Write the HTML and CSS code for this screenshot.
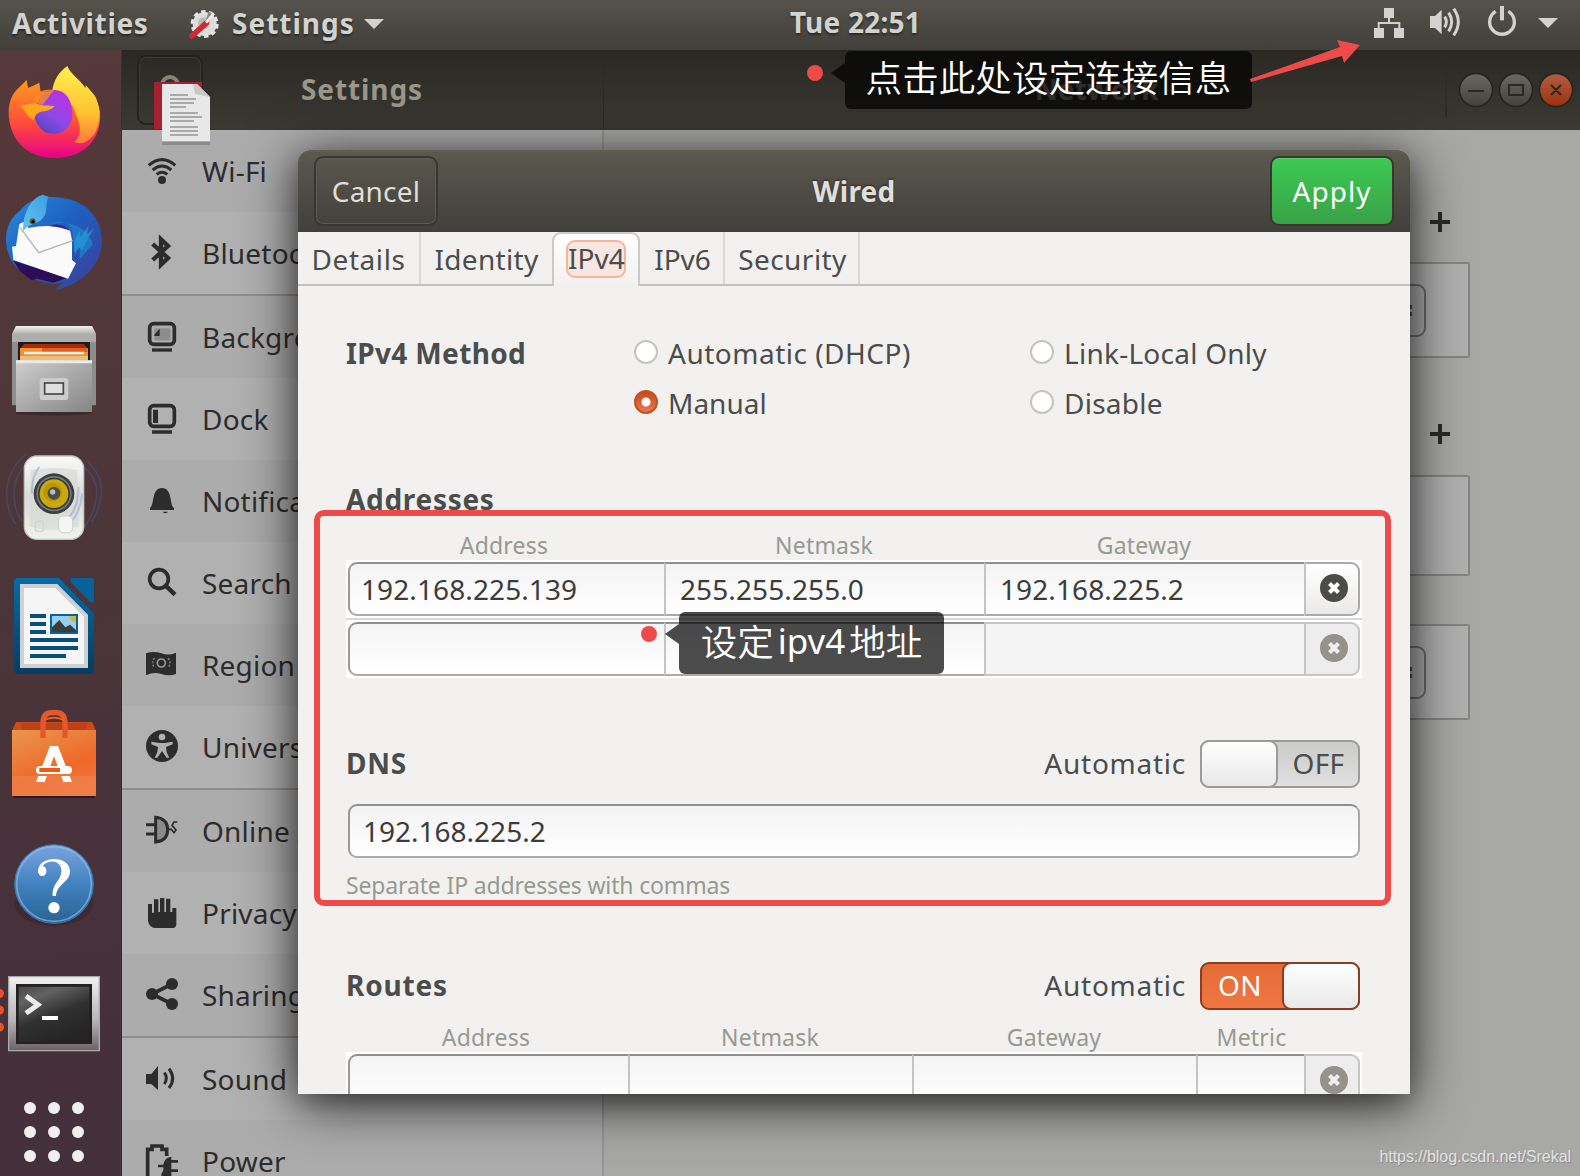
FILE: index.html
```html
<!DOCTYPE html>
<html lang="en">
<head>
<meta charset="utf-8">
<title>Settings</title>
<link rel="stylesheet" href="styles.css">
</head>
<body>
<div class="desktop">
  <header class="topbar">
    <span class="activities">Activities</span>
    <svg class="app-icon" viewBox="564 15 96 96"><circle cx="614" cy="66" r="36" fill="#dcdcda" stroke="#e4e4e2" stroke-width="12" stroke-dasharray="13 9.6"/><circle cx="612" cy="64" r="18" fill="#bbb"/><path d="M618 52l8-24 8 6-4 24z" fill="#8a8882"/><path d="M576 102l42-38" stroke="#cf2a31" stroke-width="17" stroke-linecap="round"/><path d="M618 62l24-28" stroke="#eee" stroke-width="8"/></svg>
    <span class="app-name">Settings</span>
    <svg class="app-caret" viewBox="0 0 20 12"><path d="M0 1h20l-10 10z"/></svg>
    <span class="clock">Tue 22:51</span>
    <svg class="tray" viewBox="390 0 630 150" fill="#d2d2cf"><path d="M432 24h30v30h-30zM402 84h30v30h-30zM462 84h30v30h-30z"/><path d="M447 54v15M416 86V69h62v17" fill="none" stroke="#d2d2cf" stroke-width="6"/><path d="M570 48h15l20-19v74l-20-19h-15z"/><path d="M614 50q10 16 0 32M626 38q18 28 0 56M641 26q28 40 0 80" fill="none" stroke="#d2d2cf" stroke-width="9"/><path d="M767 34a37 37 0 1 0 38 0" fill="none" stroke="#d2d2cf" stroke-width="10"/><path d="M780 18h12v43h-12z"/><path d="M894 54h60l-30 30z"/></svg>
  </header>

  <div class="workspace">
    <nav class="dock">
      <svg class="slot first" viewBox="0 150 366 381">
        <defs>
          <linearGradient id="fxp" x1="0" y1="1" x2=".6" y2="0"><stop offset="0" stop-color="#4b3fae"/><stop offset=".5" stop-color="#8a4be8"/><stop offset="1" stop-color="#b833e1"/></linearGradient>
          <linearGradient id="fxb" x1="0" y1="0" x2="0" y2="1"><stop offset="0" stop-color="#ff9a1c"/><stop offset=".55" stop-color="#ff4d3a"/><stop offset="1" stop-color="#e6008a"/></linearGradient>
          <linearGradient id="fxy" x1="0" y1="0" x2="0" y2="1"><stop offset="0" stop-color="#fff04c"/><stop offset=".6" stop-color="#ffc332"/><stop offset="1" stop-color="#ff7a3c"/></linearGradient>
        </defs>
        <path d="M46 274l34-34 4 24 14-6 20-10 4 28 42 2 96-16 8 8 20 22 12 44c6 80-46 138-136 138S26 412 26 336c0-24 8-46 20-62z" fill="url(#fxb)"/>
        <path d="M156 278c4-38 22-64 46-80 10 26 42 44 54 66l2-8 24 28c20 34 22 68 8 104-14 34-44 50-66 38 26-26 14-58 4-82-10-40-30-52-72-66z" fill="url(#fxy)"/>
        <path d="M102 340c4-36 24-66 58-70 28 0 50 14 56 58 8 44-20 74-56 74-32 0-54-26-58-62z" fill="url(#fxp)"/>
        <path d="M62 318c28-10 44-10 66-2l36 2c-10 14-28 14-44 18-16 8-16 16-18 24-20-6-26-28-40-42z" fill="#ffa61f"/>
        <path d="M118 276q20-10 44-6l-34 44-30-8q6-20 20-30z" fill="#ff8a24" opacity=".8"/>
      </svg>
      <svg class="slot" viewBox="0 531 366 387">
        <defs><linearGradient id="tb" x1="0" y1="0" x2="1" y2="1"><stop offset="0" stop-color="#2b8be0"/><stop offset=".45" stop-color="#1d5fbf"/><stop offset="1" stop-color="#3f3d94"/></linearGradient>
        <linearGradient id="tbh" x1="1" y1="0" x2="0" y2="1"><stop offset="0" stop-color="#3ba0e0"/><stop offset="1" stop-color="#63c3ee"/></linearGradient></defs>
        <path d="M60 632C96 586 160 584 216 600c60 20 90 70 90 126-2 70-62 128-140 144l24-22-30 4C80 840 20 800 18 720c0-40 16-70 42-88z" fill="url(#tb)"/>
        <path d="M40 782l100 32 60 20-40 14-50-12-16 4-34-26z" fill="#2c0e56"/>
        <path d="M144 676c26-18 60-18 74 22l4 60 20-18-4 38 40-44c-10-50-70-80-134-58z" fill="#2176c8"/>
        <path d="M58 672l12-6 16 18c40-8 84-10 124 6l6 30v60l12 10-24 46L40 780l-4-40 12-2z" fill="#fafafa"/>
        <path d="M60 682l56 76 102-36" fill="none" stroke="#b3b3b3" stroke-width="4"/>
        <path d="M70 694c-4-44 18-98 58-110l18 6c-14 28 4 50-28 74-22 10-38 14-48 30z" fill="url(#tbh)"/>
        <path d="M148 678c22-10 46-4 64 16-18-10-40-14-64-16z" fill="#3a2385"/>
        <path d="M222 730l16-40 4 20 24-34-4 26 22-20-40 70-8-12-10 24z" fill="#25a0e0" opacity=".6"/>
        <circle cx="98" cy="664" r="9" fill="#6b5626"/><circle cx="99" cy="665" r="5" fill="#111"/>
      </svg>
      <svg class="slot" viewBox="0 18 366 387">
        <defs><linearGradient id="cab" x1="0" y1="0" x2="1" y2="1"><stop offset="0" stop-color="#cfcfcf"/><stop offset="1" stop-color="#858585"/></linearGradient>
        <linearGradient id="cabt" x1="0" y1="0" x2="0" y2="1"><stop offset="0" stop-color="#f2f2f2"/><stop offset="1" stop-color="#b0b0b0"/></linearGradient></defs>
        <path d="M48 334h228v8q-114 10-228 0z" fill="#30222a" opacity=".6"/>
        <path d="M48 78h228l12 24v214H36V102z" fill="#8d8d8d"/><path d="M48 78h228l12 24H36z" fill="url(#cabt)"/><path d="M36 102h252v24H36z" fill="#adadad"/>
        <path d="M54 126h216v60H54z" fill="#1c1c1c"/><path d="M72 132h180l12 16H60z" fill="#a82b08"/><path d="M60 144h204v40H60z" fill="#ef9236"/><path d="M126 144h136v12H126z" fill="#df6020"/><path d="M72 155h180v8H72z" fill="#f8f0ea"/><path d="M60 168h204v14H60z" fill="#eebd78"/>
        <path d="M48 181h228v155H48z" fill="url(#cab)"/><path d="M48 181h228v9H48z" fill="#ebebeb"/>
        <rect x="119" y="234" width="86" height="66" rx="10" fill="#ccc"/><rect x="134" y="249" width="56" height="33" fill="#dedede" stroke="#484848" stroke-width="5"/>
      </svg>
      <svg class="slot" viewBox="0 405 366 387">
        <defs><linearGradient id="spk" x1="0" y1="0" x2="0" y2="1"><stop offset="0" stop-color="#fafaf9"/><stop offset=".5" stop-color="#dadcd9"/><stop offset="1" stop-color="#f1f2f0"/></linearGradient></defs>
        <g fill="none" stroke="#44547c" stroke-width="5" opacity=".55"><path d="M78 462q-60 54-58 120 2 60 28 90M80 490q-40 40-38 90 2 60 24 82M250 500q40 30 40 80t-40 106M262 484q44 40 42 94-2 50-30 88"/></g>
        <rect x="73" y="468" width="178" height="250" rx="38" fill="url(#spk)" stroke="#c3c5c0" stroke-width="4"/>
        <path d="M92 510q70-12 140 0l4 170q-74 20-148 0z" fill="#d5d7d4" opacity=".6"/>
        <circle cx="162" cy="581" r="61" fill="#3a3e40"/><circle cx="162" cy="581" r="53" fill="#74797a"/><circle cx="162" cy="581" r="48" fill="#34383a"/><circle cx="162" cy="581" r="43" fill="#cba90d"/><circle cx="158" cy="576" r="28" fill="#b99500"/><circle cx="162" cy="580" r="19" fill="#4c4c4a"/><circle cx="158" cy="576" r="8" fill="#bbb"/>
        <path d="M118 500q-24 30-22 80M236 560q-2 80-46 106M246 580q-4 60-40 94" fill="none" stroke="#6d93c8" stroke-width="6" opacity=".4"/>
        <rect x="176" y="648" width="42" height="50" rx="14" fill="#f5f5f5" stroke="#d0d1cf" stroke-width="3"/><rect x="106" y="664" width="24" height="30" rx="6" fill="none" stroke="#d3d4d2" stroke-width="4"/>
      </svg>
      <svg class="slot" viewBox="0 792 366 387">
        <defs><linearGradient id="wr" x1="0" y1="0" x2="0" y2="1"><stop offset="0" stop-color="#066ba5"/><stop offset="1" stop-color="#053d60"/></linearGradient></defs>
        <path d="M54 834h122l106 106v168q0 14-14 14H56q-14 0-14-14V848q0-14 12-14z" fill="url(#wr)"/><path d="M210 834h64q8 0 8 8v64q-8 4-14-2l-56-58z" fill="#06629b"/>
        <path d="M60 852h112l92 92v160H60z" fill="#cfd0d2"/><path d="M72 864h94l86 86v142H72z" fill="#f5f5f5"/>
        <path d="M90 948h48M90 972h48M90 996h48M90 1020h144M90 1044h144M90 1068h108" stroke="#045078" stroke-width="12"/>
        <path d="M150 942h84v60h-84z" fill="#06629b"/><path d="M156 948h72v48h-72z" fill="#97cff1"/><path d="M208 948h20v18q-18 0-20-18z" fill="#cdb743"/><path d="M156 996v-14l22-22 18 22 14-8 18 16v6z" fill="#3c3c3c"/>
      </svg>
      <svg class="slot" viewBox="0 9 366 387">
        <defs><linearGradient id="bag" x1="0" y1="0" x2=".5" y2="1"><stop offset="0" stop-color="#e9964f"/><stop offset=".7" stop-color="#ee692a"/><stop offset="1" stop-color="#ef7239"/></linearGradient></defs>
        <path d="M40 318h244v6H40z" fill="#291b20"/><path d="M48 96h228l12 26H36z" fill="#d04a18"/><path d="M60 98h204l-6 22H66z" fill="#bc4117"/>
        <path d="M36 120h252v198H36z" fill="url(#bag)"/><path d="M36 258h252v60H36z" fill="#f0814c" opacity=".7"/><path d="M129 144v-44q0-32 26-32h14q26 0 26 32v44" fill="none" stroke="#e4592a" stroke-width="16"/><path d="M132 90q30-14 60 0" fill="none" stroke="#ee5c20" stroke-width="6"/>
        <path d="M150 168h24l42 108h-26l-28-78-28 78h-26z" fill="#fff"/><rect x="108" y="228" width="108" height="24" rx="12" fill="#fff"/><path d="M118 234h62v12h-62z" fill="#f15a0c"/><path d="M106 252h110v6H106z" fill="#ef7239"/>
      </svg>
      <svg class="slot" viewBox="0 396 366 387">
        <defs><linearGradient id="hp" x1="0" y1="0" x2="0" y2="1"><stop offset="0" stop-color="#7aa4e0"/><stop offset=".5" stop-color="#4282c0"/><stop offset="1" stop-color="#296293"/></linearGradient></defs>
        <ellipse cx="162" cy="640" rx="118" ry="68" fill="#352229" opacity=".5"/>
        <circle cx="162" cy="582" r="118" fill="url(#hp)" stroke="#3a78b0" stroke-width="3"/><circle cx="162" cy="582" r="112" fill="none" stroke="#96bfe6" stroke-width="5" opacity=".6"/>
        <path d="M114 542C118 494 210 496 210 544c0 34-40 38-42 74h-10c-2-42 26-44 26-76 0-34-42-34-56-14 14 2 16 28 0 30-10 0-14-8-14-16z" fill="#fff"/><circle cx="162" cy="653" r="17" fill="#fff"/>
      </svg>
      <svg class="slot" viewBox="0 783 366 387">
        <defs><linearGradient id="tm" x1="0" y1="0" x2="0" y2="1"><stop offset="0" stop-color="#f2f2f2"/><stop offset=".6" stop-color="#b5b3b4"/><stop offset="1" stop-color="#6b6165"/></linearGradient>
        <linearGradient id="ts" x1="0" y1="0" x2=".5" y2="1"><stop offset="0" stop-color="#494949"/><stop offset=".25" stop-color="#626262"/><stop offset=".6" stop-color="#303030"/><stop offset="1" stop-color="#252525"/></linearGradient></defs>
        <g fill="#e2542a"><circle cx="-2" cy="910" r="14"/><circle cx="-2" cy="960" r="14"/><circle cx="-2" cy="1011" r="14"/></g>
        <path d="M26 860h272v222H26z" fill="url(#tm)" stroke="#aaa" stroke-width="4"/><path d="M48 882h228v180H48z" fill="#242022"/><path d="M56 890h212v166H56z" fill="url(#ts)"/>
        <path d="M78 918l36 26-36 26" fill="none" stroke="#eee" stroke-width="15"/><path d="M126 978h48v12h-48z" fill="#fff"/>
      </svg>
      <svg class="slot last" viewBox="0 1170 366 288" fill="#efefed"><circle cx="90" cy="1254" r="18"/><circle cx="162" cy="1254" r="18"/><circle cx="234" cy="1254" r="18"/><circle cx="90" cy="1326" r="18"/><circle cx="162" cy="1326" r="18"/><circle cx="234" cy="1326" r="18"/><circle cx="90" cy="1398" r="18"/><circle cx="162" cy="1398" r="18"/><circle cx="234" cy="1398" r="18"/></svg>
    </nav>

    <section class="window">
      <div class="titlebar">
        <div class="title-left">
          <div class="search-button"><svg viewBox="0 0 24 24"><circle cx="12" cy="11" r="8" fill="none" stroke="#86827a" stroke-width="4"/></svg></div>
          <span class="title-text">Settings</span>
        </div>
        <div class="title-right">
          <span class="network-title">Network</span>
          <div class="controls">
            <svg viewBox="0 0 120 40"><defs><linearGradient id="wb" x1="0" y1="0" x2="0" y2="1"><stop offset="0" stop-color="#696862"/><stop offset="1" stop-color="#42423c"/></linearGradient><linearGradient id="wc" x1="0" y1="0" x2="0" y2="1"><stop offset="0" stop-color="#b05f42"/><stop offset="1" stop-color="#9d300c"/></linearGradient></defs><g stroke="#23231f" stroke-width="1.5"><circle cx="20" cy="20" r="16.5" fill="url(#wb)"/><circle cx="60" cy="20" r="16.5" fill="url(#wb)"/><circle cx="100" cy="20" r="16.5" fill="url(#wc)"/></g><path d="M12 21h16M53 15h14v10H53zM95 15l10 10m0-10L95 25" fill="none" stroke="#292824" stroke-width="2"/></svg>
          </div>
        </div>
      </div>
      <div class="window-body">
        <ul class="sidebar">
          <li class="odd"><svg viewBox="366 390 180 246"><circle cx="486" cy="540" r="12"/><path d="M446 496q40-34 80 0M458 510q28-24 56 0M470 523q16-12 32 0" fill="none" stroke="#2c2c2c" stroke-width="9"/></svg><span>Wi-Fi</span></li>
          <li class="even sep"><svg viewBox="366 636 180 246"><path d="M458 732l46 42-21 20v-76l21 20-46 42" fill="none" stroke="#2c2c2c" stroke-width="13"/></svg><span>Bluetooth</span></li>
          <li class="odd"><svg viewBox="366 -12 180 246"><rect x="449" y="71" width="74" height="62" rx="12" fill="none" stroke="#2c2c2c" stroke-width="11"/><path d="M463 85h48v36h-48z" fill="#8d8d8d"/><path d="M463 104l16-18v22h-16z"/><path d="M456 145h60v10h-60z"/></svg><span>Background</span></li>
          <li class="even"><svg viewBox="366 234 180 246"><rect x="449" y="317" width="74" height="62" rx="12" fill="none" stroke="#2c2c2c" stroke-width="11"/><path d="M459 329h15v40h-15zM456 391h60v10h-60z"/></svg><span>Dock</span></li>
          <li class="odd"><svg viewBox="366 480 180 246"><path d="M450 630v-6c14-10 4-60 36-60s22 50 36 60v6zM488 635h16q-8 10-16 0z"/></svg><span>Notifications</span></li>
          <li class="even"><svg viewBox="366 726 180 246"><circle cx="477" cy="837" r="28" fill="none" stroke="#2c2c2c" stroke-width="11"/><path d="M497 857l28 27" stroke="#2c2c2c" stroke-width="13"/></svg><span>Search</span></li>
          <li class="odd"><svg viewBox="366 972 180 246"><path d="M438 1060q24-8 46 0t44-2v64q-22 8-44 0t-46 4z"/><circle cx="484" cy="1089" r="12" fill="none" stroke="#999" stroke-width="5"/><path d="M464 1074q-12 14 0 30M504 1074q12 14 0 30" fill="none" stroke="#777" stroke-width="5" stroke-dasharray="6 5"/></svg><span>Region &amp; Language</span></li>
          <li class="even sep"><svg viewBox="366 48 180 246"><circle cx="486" cy="168" r="48"/><circle cx="486" cy="141" r="10" fill="#b0b0b0"/><path d="M454 155l24 4h16l24-4v8l-20 8 2 16 8 16h-8l-14-20-14 20h-8l8-16 2-16-20-8z" fill="#b0b0b0"/></svg><span>Universal Access</span></li>
          <li class="odd"><svg viewBox="366 300 180 246"><path d="M467 382q36 4 36 37t-36 37z" fill="#8b8b8b" stroke="#2c2c2c" stroke-width="9"/><path d="M438 404h26M438 432h26" stroke="#2c2c2c" stroke-width="9"/><path d="M504 418h10l8 10 6-8-12-14 6-10h10" fill="none" stroke="#2c2c2c" stroke-width="5"/></svg><span>Online Accounts</span></li>
          <li class="even"><svg viewBox="366 546 180 246"><path d="M444 642h12v26h6v-40h13v38h5v-42h13v42h5v-40h13v40h6v-12h12v50q-2 10-12 10h-48q-22 0-25-22z"/></svg><span>Privacy</span></li>
          <li class="odd sep"><svg viewBox="366 792 180 246"><circle cx="456" cy="912" r="18"/><circle cx="516" cy="882" r="18"/><circle cx="516" cy="942" r="18"/><path d="M516 882l-60 30 60 30" fill="none" stroke="#2c2c2c" stroke-width="11"/></svg><span>Sharing</span></li>
          <li class="even"><svg viewBox="366 1044 180 246"><path d="M438 1152h16l20-24v72l-20-18h-16z"/><path d="M493 1148q12 16 0 34M507 1136q22 30 0 58" fill="none" stroke="#2c2c2c" stroke-width="9"/></svg><span>Sound</span></li>
          <li class="odd"><svg viewBox="366 1290 180 246"><path d="M456 1464h-13v-86h13v-10h30v10h14v20" fill="none" stroke="#2c2c2c" stroke-width="11"/><path d="M474 1424h16q4-22 24-24v10h20v8h-20v20h20v8h-20v26h-30v-20q8-10 6-20h-16z"/></svg><span>Power</span></li>
        </ul>
        <div class="network-panel">
          <div class="plus"></div>
          <div class="frame f1"><i></i></div>
          <div class="plus p2"></div>
          <div class="frame f2"></div>
          <div class="frame f3"><i></i></div>
        </div>
      </div>
    </section>
  </div>

  <svg class="drag-icon" viewBox="0 0 58 64"><path d="M1 1h48v47H1z" fill="#a52031"/><path d="M9 61h48v3H9z" fill="#777" opacity=".6"/><path d="M9 3h35l13 13v44H9z" fill="#e8e8e8"/><path d="M40 3h4l13 13-15-3z" fill="#c9c9c9"/><path d="M17 14h18M17 18h26M17 22h24M17 26h16M17 32h28M17 36h32M17 40h24M17 46h28M17 50h28M17 54h28" stroke="#aaa" stroke-width="2"/></svg>

  <section class="dialog">
    <header class="dialog-bar">
      <button class="btn cancel">Cancel</button>
      <h1>Wired</h1>
      <button class="btn apply">Apply</button>
    </header>
    <div class="tabs">
      <div class="tab t1"><span>Details</span></div><div class="tab t2"><span>Identity</span></div><div class="tab t3 active"><span>IPv4</span></div><div class="tab t4"><span>IPv6</span></div><div class="tab t5"><span>Security</span></div>
    </div>
    <div class="dialog-body">
      <div class="methods">
        <h2 class="method-title">IPv4 Method</h2>
        <label><i class="radio"></i><span class="dhcp">Automatic (DHCP)</span></label>
        <label><i class="radio"></i><span class="local">Link-Local Only</span></label>
        <label class="manual"><i class="radio on"></i><span>Manual</span></label>
        <label><i class="radio"></i><span class="local">Disable</span></label>
      </div>
      <h2 class="addr-title">Addresses</h2>
      <div class="cols heads"><span>Address</span><span>Netmask</span><span>Gateway</span></div>
      <div class="table pair">
        <div class="cols row"><span>192.168.225.139</span><span>255.255.255.0</span><span>192.168.225.2</span><b><svg viewBox="0 0 28 28"><circle cx="14" cy="14" r="14"/><path d="M9.5 9.5l9 9m0-9l-9 9" stroke="#fff" stroke-width="4"/></svg></b></div>
        <div class="cols row second"><span></span><span></span><span class="off"></span><b class="off"><svg viewBox="0 0 28 28"><circle cx="14" cy="14" r="14"/><path d="M9.5 9.5l9 9m0-9l-9 9" stroke="#eee" stroke-width="4"/></svg></b></div>
      </div>
      <div class="switch-row dns"><h2>DNS</h2><span>Automatic</span><div class="switch"><i></i><em>OFF</em></div></div>
      <div class="entry">192.168.225.2</div>
      <p class="hint">Separate IP addresses with commas</p>
      <div class="switch-row routes"><h2>Routes</h2><span>Automatic</span><div class="switch on"><em>ON</em><i></i></div></div>
      <div class="rcols heads rheads"><span>Address</span><span>Netmask</span><span>Gateway</span><span>Metric</span></div>
      <div class="table">
        <div class="rcols row"><span></span><span></span><span></span><span></span><b class="off"><svg viewBox="0 0 28 28"><circle cx="14" cy="14" r="14"/><path d="M9.5 9.5l9 9m0-9l-9 9" stroke="#eee" stroke-width="4"/></svg></b></div>
      </div>
    </div>
  </section>

  <div class="mark-box"></div>
  <div class="dot dot1"></div>
  <div class="tip tip1">点击此处设定连接信息</div>
  <svg class="arrow" viewBox="0 0 114 48"><path d="M2 41L92 9 89 2l23 5-16 18-2-7L3 44z" fill="#ee4a4a"/></svg>
  <div class="dot dot2"></div>
  <div class="tip tip2"><span>设定</span><span class="latin">ipv4</span><span>地址</span></div>
  <div class="watermark">https://blog.csdn.net/Srekal</div>
</div>
</body>
</html>
```

FILE: styles.css
```css
* { box-sizing: border-box; }
body { margin: 0; font-family: "Noto Sans", "Open Sans", sans-serif; font-size: 28px; }
h1, h2, p, ul { margin: 0; padding: 0; font-size: inherit; }
svg { display: block; flex: none; }
.desktop { position: relative; width: 1580px; height: 1176px; overflow: hidden; display: flex; flex-direction: column; white-space: nowrap; }

/* top panel */
.topbar { height: 50px; flex: none; display: flex; align-items: center; padding: 0 0 5px 12px; background: linear-gradient(#55534b, #403f3a); color: #d2d2cf; font-weight: 700; text-shadow: 0 2px 2px #2a2a26; }
.activities { width: 177px; letter-spacing: .65px; }
.app-icon { width: 32px; height: 32px; margin: 0 1px 0 -1px; }
.app-name { width: 122px; margin-left: 11px; letter-spacing: 1px; }
.app-caret { width: 20px; height: 12px; margin: 2px 0 0 10px; fill: #d2d2cf; }
.clock { margin-left: 406px; padding-bottom: 2px; line-height: 42px; letter-spacing: .25px; }
.tray { width: 210px; height: 50px; margin: 5px 0 0 auto; }

/* launcher */
.workspace { flex: 1; display: flex; min-height: 0; }
.dock { width: 122px; flex: none; background: linear-gradient(172deg, #563939, #4c3539 45%, #47313b 75%, #44303a); border-right: 1px solid #3f2c30; }
.slot { width: 122px; height: 129px; }
.slot.first { height: 127px; }
.slot.last { height: 96px; }

/* settings window */
.window { flex: 1; display: flex; flex-direction: column; }
.titlebar { height: 80px; flex: none; display: flex; background: linear-gradient(#292823, #3a3934); color: #9b958a; font-weight: 700; }
.title-left { width: 482px; display: flex; align-items: center; border-right: 1px solid #2b2a26; }
.search-button { width: 66px; height: 70px; margin-left: 15px; border: 2px solid #22221e; border-radius: 9px; box-shadow: inset 0 0 0 1px #3b3a36; display: flex; justify-content: center; padding-top: 17px; }
.search-button svg { width: 24px; height: 24px; }
.title-text { margin: 0 0 2px 98px; letter-spacing: .9px; }
.title-right { flex: 1; display: flex; align-items: center; justify-content: flex-end; }
.network-title { width: 125px; margin: 0 285px 2px 0; letter-spacing: .1px; }
.controls { height: 56px; width: 135px; border-left: 2px solid #2d2c28; display: flex; align-items: center; }
.controls svg { width: 120px; height: 40px; margin-left: 9px; }
.window-body { flex: 1; display: flex; min-height: 0; background: #a8a8a6; }
.sidebar { width: 482px; flex: none; list-style: none; border-right: 2px solid #969694; overflow: hidden; color: #2c2c2c; letter-spacing: .2px; }
.sidebar li { height: 82px; display: flex; align-items: center; gap: 20px; }
.sidebar .sep { height: 84px; border-bottom: 2px solid #928d88; }
.sidebar svg { width: 60px; height: 82px; fill: #2c2c2c; }
.odd { background: #acacac; }
.even { background: #b1b1b1; }
.network-panel { flex: 1; padding-top: 82px; }
.plus { width: 20px; height: 20px; margin-left: 826px; background: linear-gradient(#292a29, #292a29) center / 20px 4px no-repeat, linear-gradient(#292a29, #292a29) center / 4px 20px no-repeat; }
.frame { width: 866px; height: 96px; margin-top: 30px; padding-top: 20px; display: flex; justify-content: flex-end; border: 2px solid #858580; border-radius: 2px; background: #b0b0b0; }
.frame i { width: 90px; height: 53px; margin-right: 42px; border: 2px solid #6e6e6e; border-radius: 9px; background: linear-gradient(#4a4a4a, #4a4a4a) 71px 19px / 3px 4px no-repeat, linear-gradient(#4a4a4a, #4a4a4a) 71px 26px / 3px 4px no-repeat; }
.p2 { margin-top: 66px; }
.f2 { height: 101px; margin-top: 31px; }
.f3 { margin-top: 48px; }

.drag-icon { position: absolute; left: 153px; top: 81px; width: 58px; height: 64px; }

/* connection dialog */
.dialog { position: absolute; left: 298px; top: 150px; width: 1112px; height: 944px; border-radius: 12px 12px 0 0; background: #f2f1f0; color: #4a4d4c; box-shadow: 0 8px 56px rgba(0,0,0,.75), 0 10px 26px rgba(0,0,0,.25); display: flex; flex-direction: column; }
.dialog-bar { height: 82px; flex: none; display: grid; grid-template-columns: 124px 1fr 124px; align-items: center; padding: 0 16px 3px; background: linear-gradient(#5b584e, #403f3a); border-top: 2px solid #605e54; border-radius: 12px 12px 0 0; color: #e0dfdb; text-align: center; }
.dialog-bar h1 { font-weight: 700; text-shadow: 0 -1px 2px #282824; font-size: 28px; letter-spacing: .2px; }
.btn { height: 70px; padding: 0; border: 2px solid #38372f; border-radius: 9px; background: transparent; box-shadow: inset 0 0 0 1px #5c5a52; color: #e0ded6; font: inherit; letter-spacing: .2px; }
.apply { background: linear-gradient(#3dca53, #38a147); color: #fff; box-shadow: inset 0 1px 0 #53d267; letter-spacing: 1px; }
.tabs { height: 54px; flex: none; display: flex; border-bottom: 2px solid #c2c2c0; }
.tab { display: flex; align-items: center; justify-content: center; padding-top: 2px; border-right: 2px solid #dad9d7; }
.t1 { width: 123px; letter-spacing: .55px; }
.t2 { width: 131px; border-right: 0; letter-spacing: .3px; }
.t3 { width: 88px; height: 54px; padding: 0; border: 2px solid #cbcac8; border-bottom: 0; border-radius: 9px 9px 0 0; background: linear-gradient(#fff, #f2f1f0); }
.t4 { width: 85px; padding-left: 2px; }
.t5 { width: 135px; padding-left: 2px; letter-spacing: .45px; }
.t3 span { width: 60px; height: 38px; line-height: 33px; margin-bottom: 2px; text-align: center; border: 2px solid #f4b59c; border-radius: 9px; background: #f8e7e1; }

.dialog-body { flex: 1; min-height: 0; overflow: hidden; padding: 42px 48px 0; }
.dialog-body h2 { font-weight: 700; font-size: 28px; letter-spacing: .8px; }
.methods { display: grid; grid-template-columns: 287px 396px 1fr; grid-auto-rows: 50px; align-items: center; margin-left: 1px; }
.dialog-body .method-title { margin-left: -1px; letter-spacing: .35px; }
.manual { grid-column: 2; }
.methods label { display: flex; align-items: center; gap: 10px; }
.dhcp { letter-spacing: .5px; }
.local { letter-spacing: .25px; }
.radio { width: 24px; height: 24px; border-radius: 50%; border: 2px solid #c4c3c1; background: #fff; margin-bottom: 2px; }
.radio.on { border-color: #c4501f; background: radial-gradient(circle, #fff 0 4px, transparent 5px), linear-gradient(#cb4718, #e67a50); }
.dialog-body .addr-title { height: 50px; line-height: 50px; margin-top: 46px; margin-bottom: 1px; letter-spacing: .7px; }
.heads { height: 35px; padding-top: 5px; color: #969a90; font-size: 23px; line-height: 30px; letter-spacing: .2px; text-align: center; }
.heads span + span { padding-left: 4px; }
.cols { display: grid; grid-template-columns: 316px 320px 320px 56px; }
.table { width: 1016px; height: 118px; padding: 2px; background: #fff; }
.pair { background: linear-gradient(#fff 58px, #d9d9d9 58px 60px, #fff 60px); }
.row { height: 54px; color: #3c3c3c; }
.row span { border: 2px solid; border-width: 2px 0 2px 2px; border-color: #8f8f8f #c4c4c4 #aaa #c4c4c4; background: linear-gradient(#f4f4f4, #fff); padding-left: 14px; line-height: 50px; letter-spacing: .1px; }
.row span:first-child { border-left-color: #999; border-radius: 9px 0 0 9px; padding-left: 11px; }
.row b { border: 2px solid #aaa; border-left-color: #c4c4c4; border-radius: 0 9px 9px 0; background: linear-gradient(#fff, #ebeae8); display: flex; align-items: center; justify-content: center; padding: 0 0 2px 3px; }
.row b svg { width: 28px; height: 28px; fill: #4b4b4a; }
.row .off { border-color: #c5c5c5; background: #f4f4f4; }
.row b.off { background: #ededed; }
.row b.off svg { fill: #96928b; }
.second { margin-top: 6px; }
.switch-row { display: flex; align-items: center; height: 48px; margin-right: 2px; }
.switch-row h2 { margin-right: auto; padding-bottom: 2px; }
.switch-row > span { letter-spacing: .75px; padding-bottom: 2px; }
.dns { margin-top: 62px; }
.switch { width: 160px; height: 48px; margin-left: 14px; display: flex; border: 2px solid #9b9b98; border-radius: 9px; background: linear-gradient(#cbcbca, #e0e0e0); }
.switch i { width: 78px; height: 48px; margin: -2px; border: 2px solid #9b9b98; border-radius: 9px; background: linear-gradient(#fff, #eae9e8); flex: none; }
.switch em { font-style: normal; flex: 1; text-align: center; line-height: 42px; padding-left: 3px; letter-spacing: .4px; }
.switch.on { border-color: #8c3c20; background: linear-gradient(#e56b35, #ef7744); color: #fff; }
.switch.on em { padding: 0 6px 0 0; }
.switch.on i { border-color: #8c3c20; }
.entry { width: 1012px; height: 54px; margin: 16px 2px 0; border: 2px solid; border-color: #8f8f8f #aaa #aaa #999; border-radius: 9px; background: linear-gradient(#f3f3f3, #fff); line-height: 50px; padding-left: 13px; color: #3c3c3c; }
.hint { font-size: 23px; line-height: 32px; color: #969a90; margin-top: 11px; letter-spacing: -.15px; }
.routes { margin-top: 61px; }
.rcols { display: grid; grid-template-columns: 280px 284px 284px 108px 56px; }
.rheads { height: 42px; padding-top: 12px; }
.rheads span:last-child { padding-left: 7px; }

/* annotations */
.mark-box { position: absolute; left: 314px; top: 510px; width: 1077px; height: 396px; border: 6px solid #ee4a4a; border-radius: 10px; }
.dot { position: absolute; width: 16px; height: 16px; border-radius: 50%; background: #ee4a4a; }
.dot1 { left: 807px; top: 65px; }
.dot2 { left: 641px; top: 626px; }
.tip { position: absolute; border-radius: 6px; background: rgba(0,0,0,.7); color: #fff; font-family: "Noto Sans CJK SC", sans-serif; font-weight: 350; text-align: center; }
.tip::before { content: ""; position: absolute; left: -14px; top: 12px; border: 10px solid transparent; border-left: 0; border-right: 14px solid rgba(0,0,0,.7); }
.tip1 { left: 845px; top: 51px; width: 407px; height: 58px; line-height: 51px; font-size: 36.6px; }
.tip2 { left: 679px; top: 612px; width: 265px; height: 62px; line-height: 58px; font-size: 36.5px; display: flex; justify-content: center; gap: 4px; }
.latin { font-family: "Noto Sans", sans-serif; font-weight: 400; font-size: 35px; }
.arrow { position: absolute; left: 1248px; top: 38px; width: 114px; height: 48px; }
.watermark { position: absolute; right: 9px; bottom: 9px; font: 16px/20px "Liberation Sans", sans-serif; letter-spacing: -.05px; color: #e2e2e2; text-shadow: 1px 1px 1px #888; }
```
